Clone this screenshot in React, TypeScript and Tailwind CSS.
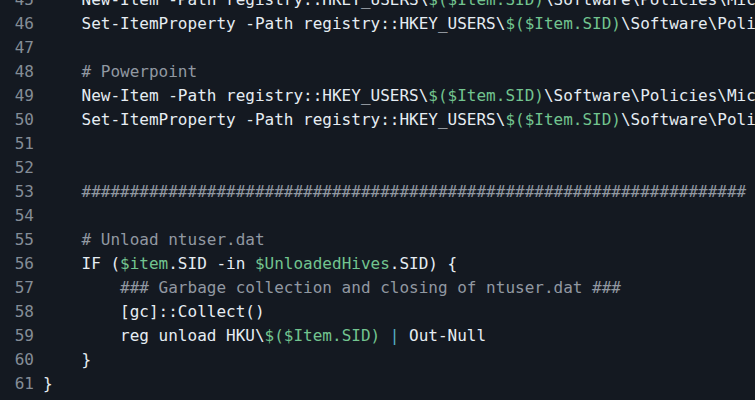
import React from 'react';

type Tok = [string, 'w' | 'c' | 'g' | 'p'];

const color: Record<Tok[1], string> = {
  w: 'text-[#e6edf3]',
  c: 'text-[#9198a1]',
  g: 'text-[#72c48f]',
  p: 'text-[#56b3c2]',
};

const sid: Tok = ['$($Item.SID)', 'g'];

const lines: { n: number; t: Tok[] }[] = [
  { n: 45, t: [['    New-Item -Path registry::HKEY_USERS\\', 'w'], sid, ['\\Software\\Policies\\Microsoft\\Office\\16.0\\PowerPoint', 'w']] },
  { n: 46, t: [['    Set-ItemProperty -Path registry::HKEY_USERS\\', 'w'], sid, ['\\Software\\Policies\\Microsoft\\Office\\16.0\\Word', 'w']] },
  { n: 47, t: [] },
  { n: 48, t: [['    # Powerpoint', 'c']] },
  { n: 49, t: [['    New-Item -Path registry::HKEY_USERS\\', 'w'], sid, ['\\Software\\Policies\\Microsoft\\Office\\16.0\\PowerPoint', 'w']] },
  { n: 50, t: [['    Set-ItemProperty -Path registry::HKEY_USERS\\', 'w'], sid, ['\\Software\\Policies\\Microsoft\\Office\\16.0\\PowerPoint', 'w']] },
  { n: 51, t: [] },
  { n: 52, t: [] },
  { n: 53, t: [['    ' + '#'.repeat(69), 'c']] },
  { n: 54, t: [] },
  { n: 55, t: [['    # Unload ntuser.dat', 'c']] },
  {
    n: 56,
    t: [
      ['    IF (', 'w'],
      ['$item', 'g'],
      ['.SID -in ', 'w'],
      ['$UnloadedHives', 'g'],
      ['.SID) {', 'w'],
    ],
  },
  { n: 57, t: [['        ### Garbage collection and closing of ntuser.dat ###', 'c']] },
  { n: 58, t: [['        [gc]::Collect()', 'w']] },
  {
    n: 59,
    t: [
      ['        reg unload HKU\\', 'w'],
      sid,
      [' ', 'w'],
      ['|', 'p'],
      [' Out-Null', 'w'],
    ],
  },
  { n: 60, t: [['    }', 'w']] },
  { n: 61, t: [['}', 'w']] },
];

export default function App() {
  return (
    <div className="w-[755px] h-[400px] overflow-hidden bg-[#141921] font-['DejaVu_Sans_Mono',monospace] text-[16px]">
      <div className="-mt-3 flex flex-col">
        {lines.map((l) => (
          <div key={l.n} className="flex h-6 leading-6 whitespace-pre">
            <span className="w-[34px] shrink-0 text-right text-[#848d97]">{l.n}</span>
            <span className="pl-[9px]">
              {l.t.map(([s, c], i) => (
                <span key={i} className={color[c]}>
                  {s}
                </span>
              ))}
            </span>
          </div>
        ))}
      </div>
    </div>
  );
}
